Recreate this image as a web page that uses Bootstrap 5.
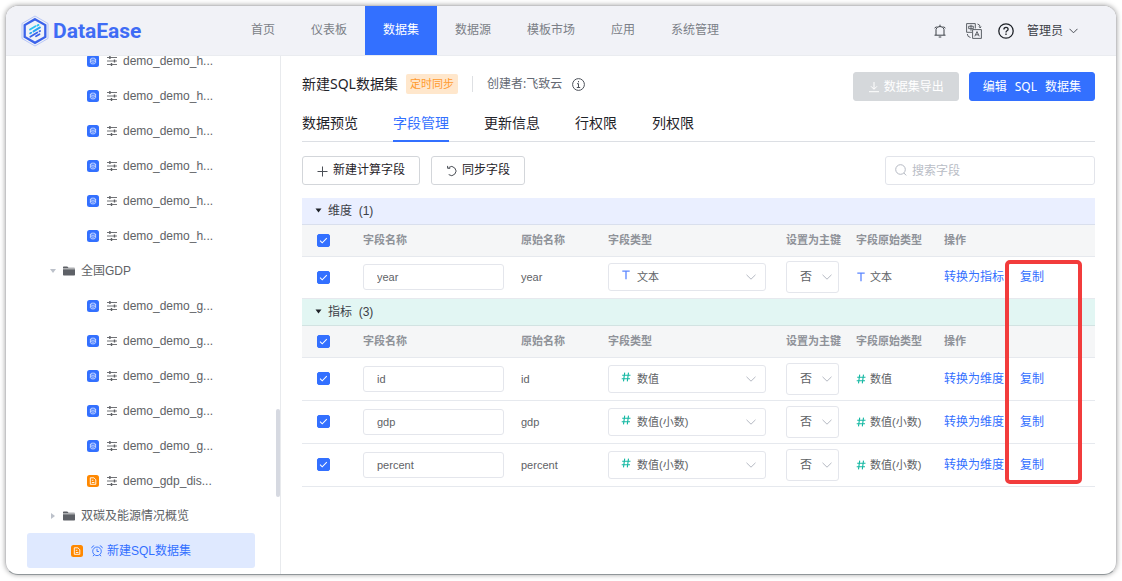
<!DOCTYPE html>
<html lang="zh-CN">
<head>
<meta charset="utf-8">
<meta name="viewport" content="width=device-width, initial-scale=1">
<title>DataEase</title>
<link href="https://cdn.jsdelivr.net/npm/bootstrap@5.3.0/dist/css/bootstrap.min.css" rel="stylesheet">
<style>
  :root { --de-blue: #3370ff; --de-text: #1f2329; --de-gray: #606266; --de-line: #e6e9ee; }
  body { font-family: "Liberation Sans", "Noto Sans CJK SC", sans-serif; font-size: 12px; line-height: 20px; color: var(--de-gray); background: #fff; }
  svg { display: block; flex: none; }
  a { text-decoration: none; color: var(--de-blue); }
  .seg { font-family: "Noto Sans", "Noto Sans CJK SC", sans-serif; }
  .app-window { height: calc(100vh - 11px); margin: 5px 5px 6px; border: 1px solid #c4c4c6; border-bottom-color: #909699; border-radius: 13px; box-shadow: 0 0 5px rgba(0,0,0,.35); overflow: hidden; }
  .top-bar { height: 50px; background: #f1f2f7; border-bottom: 1px solid #eaecf0; padding: 0 38px 0 15px; }
  .brand { width: 212px; gap: 4px; font: bold 21px/28px Roboto, sans-serif; color: #3f6cf5; }
  .top-nav a { padding: 0 18px; line-height: 49px; color: #7b7f87; }
  .top-nav a.active { background: var(--de-blue); color: #fff; }
  .top-tools { gap: 16px; }
  .top-tools .lang { margin-left: 4px; }
  .top-tools .user { gap: 6px; margin-left: -3px; color: #3c4047; }
  .side { width: 275px; border-right: 1px solid #e8eaed; }
  .tree { padding: 0 25px 6px 21px; }
  .tree a { height: 35px; color: #606266; border-radius: 3px; }
  .tree .leaf { padding-left: 60px; gap: 8px; }
  .tree .leaf span { margin-left: -2px; }
  .tree .folder { padding-left: 22px; gap: 6px; }
  .tree .picked { padding-left: 44px; gap: 8px; background: #dfe9ff; color: var(--de-blue); }
  .tree .picked span { margin-left: -4px; }
  .scroll-thumb { right: 0; top: 353px; width: 4px; height: 88px; border-radius: 2px; background: #d6d9e1; }
  .content { padding: 16px 21px 0; }
  .title-row { height: 28px; gap: 10px; }
  .title-text { height: 24px; }
  .ds-name { font-size: 14px; line-height: 24px; color: var(--de-text); }
  .sync-tag { font-size: 11px; line-height: 20px; padding: 0 4px; color: #ff9a2e; background: #ffe7cc; border-radius: 2px; margin-left: 8px; }
  .v-rule { width: 1px; height: 16px; background: #dee0e3; margin: 0 14px; }
  .creator { color: #646a73; gap: 10px; }
  .btn { --bs-btn-font-size: 12px; --bs-btn-border-radius: 3px; --bs-btn-padding-y: 0; line-height: 27px; height: 29px; }
  .btn-export { --bs-btn-padding-x: 14px; --bs-btn-disabled-bg: #d5d8db; --bs-btn-disabled-border-color: #d5d8db; --bs-btn-disabled-color: #fff; --bs-btn-disabled-opacity: 1; }
  .btn-edit { --bs-btn-padding-x: 13px; --bs-btn-bg: #3370ff; --bs-btn-border-color: #3370ff; --bs-btn-color: #fff; }
  .btn-tool { --bs-btn-padding-x: 14px; --bs-btn-border-color: #d3d6da; --bs-btn-color: #1f2329; --bs-btn-bg: #fff; }
  .page-tabs { gap: 35px; border-bottom: 1px solid #dcdfe4; height: 42px; }
  .page-tabs a { font-size: 14px; line-height: 22px; color: var(--de-text); padding: 12px 0 6px; height: 42px; }
  .page-tabs a.active { color: var(--de-blue); border-bottom: 2px solid var(--de-blue); }
  .tool-row { margin: 14px 0 13px; gap: 11px; }
  .search-box { width: 210px; }
  .search-box svg { left: 10px; top: 8px; }
  .search-box input { height: 29px; padding: 0 10px 0 26px; font-size: 12px; border-color: #e2e4ea; border-radius: 3px; }
  .search-box input::placeholder { color: #b9bdc6; }
  .fields { table-layout: fixed; width: 100%; font-size: 11px; line-height: 16px; color: var(--de-gray); }
  .fields td, .fields th { padding: 0; white-space: nowrap; vertical-align: middle; border-bottom: 1px solid var(--de-line); }
  .fields .group th { height: 26px; font-size: 12px; font-weight: 400; color: #3c4047; background: #eaefff; border-color: #d9dfed; }
  .fields .group svg { margin: 0 6px 0 13px; }
  .fields .group.measure th { height: 27px; background: #e2f6f3; border-color: #d2e3e2; }
  .fields .heads th { height: 32px; background: #f5f6f7; color: #8f9299; font-weight: 700; }
  .fields .item td { height: 42px; }
  .fields .measure ~ .item td { height: 43px; }
  .c-check { width: 61px; } .c-name { width: 158px; } .c-origin { width: 87px; } .c-type { width: 178px; }
  .c-key { width: 70px; } .c-raw { width: 88px; } .c-ops { width: 151px; }
  .fields .form-check-input { width: 13px; height: 13px; margin: 0 0 0 15px; border-radius: 2px; display: block; }
  .form-check-input:checked { background-color: var(--de-blue); border-color: var(--de-blue); background-image: url("data:image/svg+xml,%3Csvg xmlns='http://www.w3.org/2000/svg' viewBox='0 0 13 13'%3E%3Cpath fill='none' stroke='%23fff' stroke-width='1.2' d='M2.4 6.6l2.6 2.6 5.4-5.6'/%3E%3C/svg%3E"); }
  .name-input { width: calc(100% - 17px); height: 26px; font-size: 11px; padding: 0 13px; color: var(--de-gray); border-color: #e4e6ec; border-radius: 3px; }
  .pick { background-image: url("data:image/svg+xml,%3Csvg xmlns='http://www.w3.org/2000/svg' viewBox='0 0 10 10'%3E%3Cpath fill='none' stroke='%23b4b8c2' d='M.5 2.8L5 7.2l4.5-4.4'/%3E%3C/svg%3E"); background-size: 10px; color: var(--de-gray); border-color: #e4e6ec; border-radius: 3px; font-size: 11px; line-height: 16px; }
  .type-box { width: calc(100% - 20px); }
  .type-box svg { left: 13px; top: 7px; }
  .type-box .pick { height: 28px; padding: 0 24px 0 28px; background-position: right 9px center; }
  .key-pick { width: 53px; height: 32px; padding: 0 18px 0 13px; font-size: 12px; background-position: right 6px center; }
  .ops { gap: 16px; font-size: 12px; }
  .mark-frame { top: 62px; bottom: 3px; right: 13px; width: 77px; border: 4px solid #f23c3c; border-radius: 5px; pointer-events: none; }
</style>
</head>
<body>
<svg width="0" height="0" class="position-absolute" aria-hidden="true">
  <symbol id="i-db" viewBox="0 0 12 12"><rect width="12" height="12" rx="2.5" fill="#3370ff"/><g fill="none" stroke="#dfe8ff" stroke-width=".8"><ellipse cx="6" cy="4.200" rx="2.600" ry="1.100"/><path d="M3.400 4.200v3.600c0 1.500 5.200 1.500 5.200 0V4.200M3.400 6c0 1.500 5.200 1.500 5.200 0"/></g></symbol>
  <symbol id="i-sql" viewBox="0 0 12 12"><rect width="12" height="12" rx="2.5" fill="#ff8800"/><path d="M3.300 2.800h3.600l1.900 1.900v4.600H3.300zM4.800 5.300h1.600M4.800 7.500h2.600" fill="none" stroke="#fff" stroke-width=".9"/></symbol>
  <symbol id="i-tune" viewBox="0 0 10 10"><path d="M0 1.500h10M0 5h10M0 8.500h10" stroke="#606266" stroke-width=".9"/><path d="M2.200 0h1.400v3H2.200zM6.800 3.500h1.400v3H6.800zM3.800 7h1.400v3H3.800z" fill="#606266"/></symbol>
  <symbol id="i-folder" viewBox="0 0 12 10"><path d="M0 2.600V1.200Q0 .5.700.5h3.600l1.200 1.300h5.800q.7 0 .7.800zM0 3.300h12v5.500q0 .7-.7.700H.7Q0 9.500 0 8.800z" fill="#5e6167"/></symbol>
  <symbol id="i-text" viewBox="0 0 10 10"><path d="M1.300 1.200h7.400M5 1.200v8" fill="none" stroke="#5b86ff" stroke-width="1.300"/></symbol>
  <symbol id="i-num" viewBox="0 0 10 10"><path d="M3.700 .6L2.500 9.400M7.500 .6L6.300 9.400M1.200 3.300h8.300M.7 6.700h8.300" fill="none" stroke="#14b8a3" stroke-width="1.100"/></symbol>
</svg>

<div class="app-window d-flex flex-column">
  <header class="top-bar d-flex align-items-center flex-shrink-0">
    <a class="brand d-flex align-items-center flex-shrink-0" href="#">
      <svg width="28" height="32" viewBox="0 0 28 32" fill="none">
        <path d="M14 1l13 7.500v15L14 31 1 23.500v-15z" stroke="#a9bdf8" stroke-width=".8"/>
        <path d="M14 4.200l10.300 5.900v11.800L14 27.800 3.700 21.900V10.100z" stroke="#3b63ea" stroke-width="2.300"/>
        <path d="M9 14.500l5.500-3.300M16.500 10.500l1-.6" stroke="#2bc4f2" stroke-width="1.900" stroke-linecap="round"/>
        <path d="M9.200 18.300l1-.6M12.500 16.400l6.500-4" stroke="#28a6f3" stroke-width="1.900" stroke-linecap="round"/>
        <path d="M9.300 21.700l7-4.200M18.500 16.300l.6-.4M15 21.300l3.500-2" stroke="#3b63ea" stroke-width="1.800" stroke-linecap="round"/>
      </svg>
      <span>DataEase</span>
    </a>
    <nav class="top-nav d-flex text-nowrap me-auto">
      <a href="#">首页</a><a href="#">仪表板</a><a href="#" class="active" aria-current="page">数据集</a><a href="#">数据源</a><a href="#">模板市场</a><a href="#">应用</a><a href="#">系统管理</a>
    </nav>
    <div class="top-tools d-flex align-items-center text-nowrap">
      <a href="#" aria-label="消息"><svg width="12" height="14" viewBox="0 0 12 14" fill="none" stroke="#3c4047"><path d="M2 11V5.500Q2 2.500 6 2.500t4 3V11M.5 11.200h11M6 2.500V.7M4.700 13h2.600M.6 4.300L2.300 2.500M11.400 4.300L9.700 2.500"/></svg></a>
      <a href="#" class="lang" aria-label="语言"><svg width="16" height="16" viewBox="0 0 16 16" fill="none" stroke="#4b4f56" stroke-width=".9"><path d="M6 9.300H.6V.6h8.700V5.500M6.600 6.600h8.800v8.800H6.600zM2.700 3.200h4.600v2.500H2.700zM5 1.800v6M8.800 13.300L11 8.600l2.200 4.700M9.700 11.800h2.600M11.500 1q2.700.3 2.700 3.600M1.300 11q.2 3 3.200 3.500M13 3.700l1.200 1.200 1-1.200"/></svg></a>
      <a href="#" aria-label="帮助"><svg width="16" height="16" viewBox="0 0 16 16" fill="none" stroke="#1f2329" stroke-width="1.300"><circle cx="8" cy="8" r="7.200"/><path d="M5.900 6.500q0-2.200 2.100-2.200t2.100 1.900q0 1-1.100 1.600Q8 8.400 8 9.400"/><path d="M8 10.600v1.400"/></svg></a>
      <a href="#" class="user d-flex align-items-center">管理员<svg width="9" height="6" viewBox="0 0 9 6" fill="none" stroke="#4b4f56"><path d="M.5.800l4 4 4-4"/></svg></a>
    </div>
  </header>

  <div class="d-flex flex-grow-1 overflow-hidden">
    <aside class="side position-relative flex-shrink-0 d-flex flex-column justify-content-end">
      <ul class="tree list-unstyled m-0">
        <li><a href="#" class="leaf d-flex align-items-center"><svg width="12" height="12"><use href="#i-db"/></svg><svg width="10" height="10"><use href="#i-tune"/></svg><span>demo_demo_h...</span></a></li>
        <li><a href="#" class="leaf d-flex align-items-center"><svg width="12" height="12"><use href="#i-db"/></svg><svg width="10" height="10"><use href="#i-tune"/></svg><span>demo_demo_h...</span></a></li>
        <li><a href="#" class="leaf d-flex align-items-center"><svg width="12" height="12"><use href="#i-db"/></svg><svg width="10" height="10"><use href="#i-tune"/></svg><span>demo_demo_h...</span></a></li>
        <li><a href="#" class="leaf d-flex align-items-center"><svg width="12" height="12"><use href="#i-db"/></svg><svg width="10" height="10"><use href="#i-tune"/></svg><span>demo_demo_h...</span></a></li>
        <li><a href="#" class="leaf d-flex align-items-center"><svg width="12" height="12"><use href="#i-db"/></svg><svg width="10" height="10"><use href="#i-tune"/></svg><span>demo_demo_h...</span></a></li>
        <li><a href="#" class="leaf d-flex align-items-center"><svg width="12" height="12"><use href="#i-db"/></svg><svg width="10" height="10"><use href="#i-tune"/></svg><span>demo_demo_h...</span></a></li>
        <li><a href="#" class="folder d-flex align-items-center"><svg width="8" height="8" viewBox="0 0 8 8"><path d="M1 2h6L4 6z" fill="#bcc1ca"/></svg><svg width="12" height="10"><use href="#i-folder"/></svg>全国GDP</a></li>
        <li><a href="#" class="leaf d-flex align-items-center"><svg width="12" height="12"><use href="#i-db"/></svg><svg width="10" height="10"><use href="#i-tune"/></svg><span>demo_demo_g...</span></a></li>
        <li><a href="#" class="leaf d-flex align-items-center"><svg width="12" height="12"><use href="#i-db"/></svg><svg width="10" height="10"><use href="#i-tune"/></svg><span>demo_demo_g...</span></a></li>
        <li><a href="#" class="leaf d-flex align-items-center"><svg width="12" height="12"><use href="#i-db"/></svg><svg width="10" height="10"><use href="#i-tune"/></svg><span>demo_demo_g...</span></a></li>
        <li><a href="#" class="leaf d-flex align-items-center"><svg width="12" height="12"><use href="#i-db"/></svg><svg width="10" height="10"><use href="#i-tune"/></svg><span>demo_demo_g...</span></a></li>
        <li><a href="#" class="leaf d-flex align-items-center"><svg width="12" height="12"><use href="#i-db"/></svg><svg width="10" height="10"><use href="#i-tune"/></svg><span>demo_demo_g...</span></a></li>
        <li><a href="#" class="leaf d-flex align-items-center"><svg width="12" height="12"><use href="#i-sql"/></svg><svg width="10" height="10"><use href="#i-tune"/></svg><span>demo_gdp_dis...</span></a></li>
        <li><a href="#" class="folder d-flex align-items-center"><svg width="8" height="8" viewBox="0 0 8 8"><path d="M2 1l4 3-4 3z" fill="#bcc1ca"/></svg><svg width="12" height="10"><use href="#i-folder"/></svg>双碳及能源情况概览</a></li>
        <li><a href="#" class="picked d-flex align-items-center"><svg width="12" height="12"><use href="#i-sql"/></svg><svg width="12" height="12" viewBox="0 0 12 12" fill="none" stroke="#3370ff" stroke-width=".9"><circle cx="6" cy="6.300" r="4.300"/><path d="M6 3.800v2.700h2M.6 3.200Q1 1 3.200.700M11.400 3.200Q11 1 8.800.700M3 9.800L2 11.200M9 9.800l1 1.400"/></svg><span>新建SQL数据集</span></a></li>
      </ul>
      <div class="scroll-thumb position-absolute"></div>
    </aside>

    <main class="content flex-grow-1">
      <div class="title-row d-flex text-nowrap">
        <div class="title-text d-flex align-items-center me-auto seg">
          <span class="ds-name">新建SQL数据集</span>
          <span class="sync-tag">定时同步</span>
          <span class="v-rule"></span>
          <span class="creator d-flex align-items-center">创建者:飞致云
            <svg width="13" height="13" viewBox="0 0 13 13" fill="none" stroke="#4b5058"><circle cx="6.500" cy="6.500" r="5.900"/><path d="M6.500 3v1.300M5 5.700h1.500v3.800M4.800 9.500h3.400"/></svg>
          </span>
        </div>
        <button type="button" class="btn btn-export seg d-flex align-items-center gap-1" disabled><svg width="12" height="12" viewBox="0 0 12 12" fill="none" stroke="#fff"><path d="M6 1v7M3 5.300l3 3 3-3M1 10.700h10"/></svg>数据集导出</button>
        <button type="button" class="btn btn-edit seg d-flex align-items-center"><span>编辑</span><span class="px-2">SQL</span><span>数据集</span></button>
      </div>

      <nav class="page-tabs d-flex text-nowrap">
        <a href="#">数据预览</a><a href="#" class="active" aria-current="true">字段管理</a><a href="#">更新信息</a><a href="#">行权限</a><a href="#">列权限</a>
      </nav>

      <div class="tool-row d-flex text-nowrap">
        <button type="button" class="btn btn-tool d-flex align-items-center gap-1"><svg width="12" height="12" viewBox="0 0 12 12" stroke="#4b4f56"><path d="M.5 6.500h10M5.500 1.500v10"/></svg>新建计算字段</button>
        <button type="button" class="btn btn-tool d-flex align-items-center gap-1"><svg width="12" height="12" viewBox="0 0 12 12" fill="none" stroke="#4b4f56"><path d="M2.700 9.600A4.500 4.500 0 1 0 2.700 2.500M1.600.900v2.400h2.600"/></svg>同步字段</button>
        <label class="search-box position-relative ms-auto"><svg class="position-absolute" width="12" height="12" viewBox="0 0 12 12" fill="none" stroke="#b4b8c2"><circle cx="5.500" cy="5.500" r="4.800"/><path d="M8.900 9l2.300 2.400"/></svg><input type="text" class="form-control" placeholder="搜索字段" aria-label="搜索字段"></label>
      </div>

      <div class="position-relative">
        <table class="fields">
          <colgroup><col class="c-check"><col class="c-name"><col class="c-origin"><col class="c-type"><col class="c-key"><col class="c-raw"><col class="c-ops"></colgroup>
          <tbody>
            <tr class="group"><th colspan="7"><div class="d-flex align-items-center"><svg width="7" height="5" viewBox="0 0 7 5"><path d="M.5.500h6l-3 4z" fill="#1f2329"/></svg>维度&nbsp; (1)</div></th></tr>
            <tr class="heads"><th><input class="form-check-input" type="checkbox" checked aria-label="全选维度"></th><th>字段名称</th><th>原始名称</th><th>字段类型</th><th>设置为主键</th><th>字段原始类型</th><th>操作</th></tr>
            <tr class="item">
              <td><input class="form-check-input" type="checkbox" checked aria-label="year"></td>
              <td><input class="form-control name-input" value="year" aria-label="字段名称"></td><td>year</td>
              <td><div class="type-box position-relative"><select class="form-select pick" aria-label="字段类型"><option>文本</option></select><svg class="position-absolute" width="10" height="10"><use href="#i-text"/></svg></div></td>
              <td><select class="form-select pick key-pick" aria-label="设置为主键"><option>否</option></select></td>
              <td><span class="d-flex align-items-center"><svg class="me-1" width="10" height="10"><use href="#i-text"/></svg>文本</span></td>
              <td><div class="ops d-flex"><a href="#">转换为指标</a><a href="#">复制</a></div></td>
            </tr>
            <tr class="group measure"><th colspan="7"><div class="d-flex align-items-center"><svg width="7" height="5" viewBox="0 0 7 5"><path d="M.5.500h6l-3 4z" fill="#1f2329"/></svg>指标&nbsp; (3)</div></th></tr>
            <tr class="heads"><th><input class="form-check-input" type="checkbox" checked aria-label="全选指标"></th><th>字段名称</th><th>原始名称</th><th>字段类型</th><th>设置为主键</th><th>字段原始类型</th><th>操作</th></tr>
            <tr class="item">
              <td><input class="form-check-input" type="checkbox" checked aria-label="id"></td>
              <td><input class="form-control name-input" value="id" aria-label="字段名称"></td><td>id</td>
              <td><div class="type-box position-relative"><select class="form-select pick" aria-label="字段类型"><option>数值</option></select><svg class="position-absolute" width="10" height="10"><use href="#i-num"/></svg></div></td>
              <td><select class="form-select pick key-pick" aria-label="设置为主键"><option>否</option></select></td>
              <td><span class="d-flex align-items-center"><svg class="me-1" width="10" height="10"><use href="#i-num"/></svg>数值</span></td>
              <td><div class="ops d-flex"><a href="#">转换为维度</a><a href="#">复制</a></div></td>
            </tr>
            <tr class="item">
              <td><input class="form-check-input" type="checkbox" checked aria-label="gdp"></td>
              <td><input class="form-control name-input" value="gdp" aria-label="字段名称"></td><td>gdp</td>
              <td><div class="type-box position-relative"><select class="form-select pick" aria-label="字段类型"><option>数值(小数)</option></select><svg class="position-absolute" width="10" height="10"><use href="#i-num"/></svg></div></td>
              <td><select class="form-select pick key-pick" aria-label="设置为主键"><option>否</option></select></td>
              <td><span class="d-flex align-items-center"><svg class="me-1" width="10" height="10"><use href="#i-num"/></svg>数值(小数)</span></td>
              <td><div class="ops d-flex"><a href="#">转换为维度</a><a href="#">复制</a></div></td>
            </tr>
            <tr class="item">
              <td><input class="form-check-input" type="checkbox" checked aria-label="percent"></td>
              <td><input class="form-control name-input" value="percent" aria-label="字段名称"></td><td>percent</td>
              <td><div class="type-box position-relative"><select class="form-select pick" aria-label="字段类型"><option>数值(小数)</option></select><svg class="position-absolute" width="10" height="10"><use href="#i-num"/></svg></div></td>
              <td><select class="form-select pick key-pick" aria-label="设置为主键"><option>否</option></select></td>
              <td><span class="d-flex align-items-center"><svg class="me-1" width="10" height="10"><use href="#i-num"/></svg>数值(小数)</span></td>
              <td><div class="ops d-flex"><a href="#">转换为维度</a><a href="#">复制</a></div></td>
            </tr>
          </tbody>
        </table>
        <div class="mark-frame position-absolute"></div>
      </div>
    </main>
  </div>
</div>
<script src="https://cdn.jsdelivr.net/npm/bootstrap@5.3.0/dist/js/bootstrap.bundle.min.js"></script>
</body>
</html>
